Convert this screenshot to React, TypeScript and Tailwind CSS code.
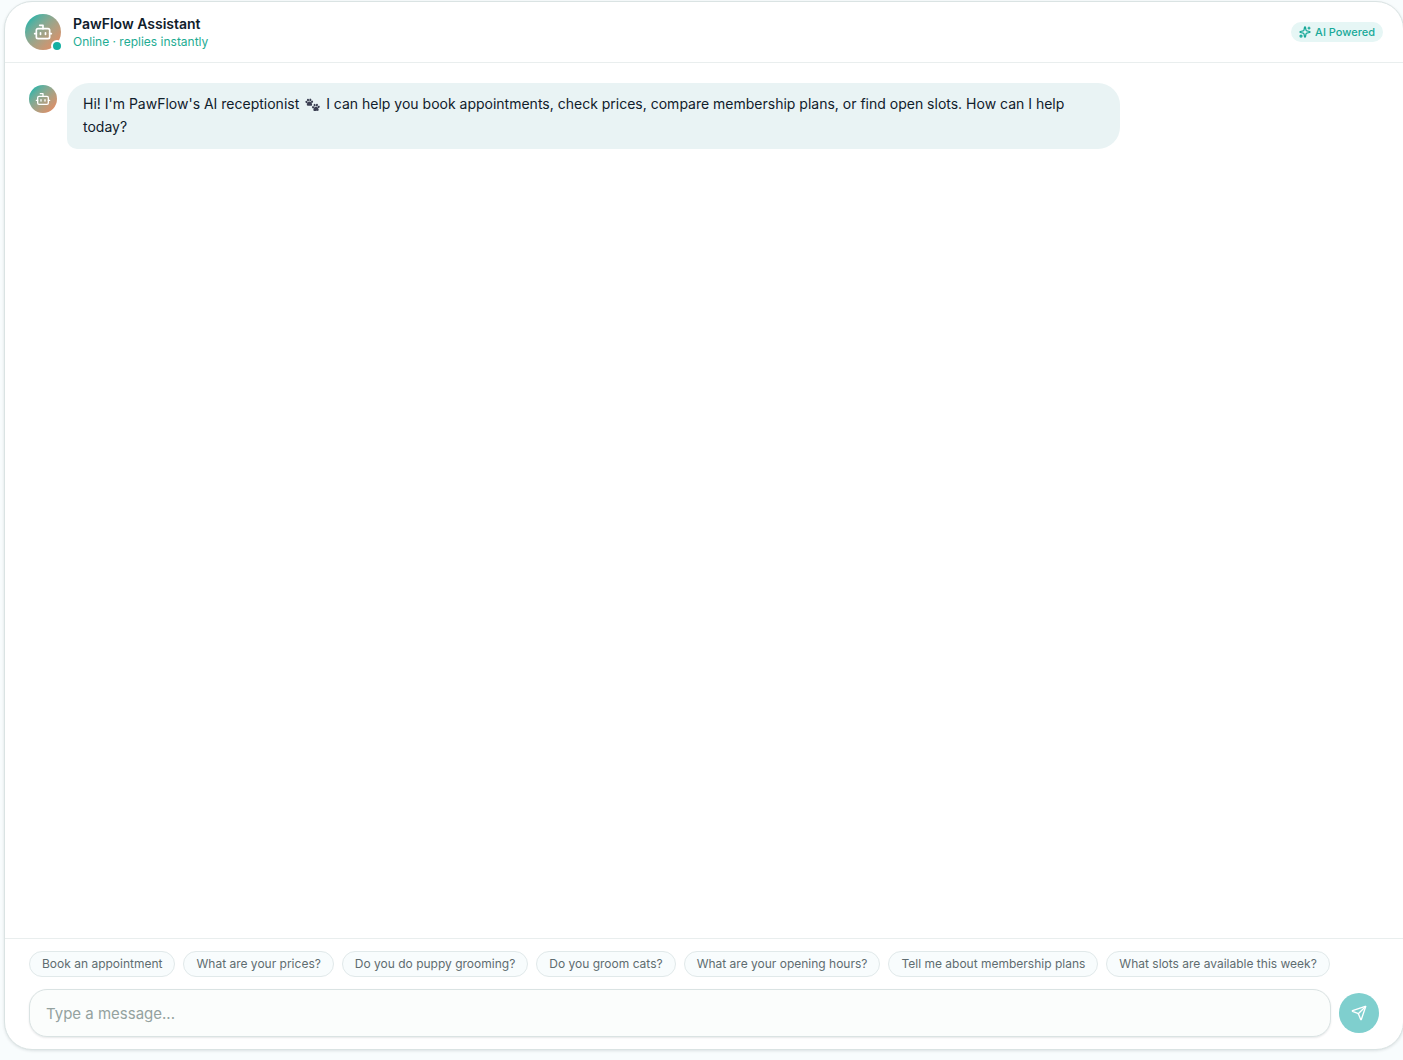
import { useState } from 'react';
import { Bot, Send, Sparkles } from 'lucide-react';
import clsx from 'clsx';

const SUGGESTIONS = [
  'Book an appointment',
  'What are your prices?',
  'Do you do puppy grooming?',
  'Do you groom cats?',
  'What are your opening hours?',
  'Tell me about membership plans',
  'What slots are available this week?',
];

function BotAvatar({ small = false }: { small?: boolean }) {
  return (
    <div
      className={clsx(
        'flex shrink-0 items-center justify-center rounded-full bg-linear-to-br from-[#35b2a5] from-15% to-[#d8906a] to-85% text-white',
        small ? 'mt-0.5 size-7' : 'size-9',
      )}
    >
      <Bot className={small ? 'size-4' : 'size-5'} />
    </div>
  );
}

function PawPrints() {
  return (
    <svg viewBox="0 0 16 14" className="mx-0.5 inline-block h-3.5 w-[15px] align-[-3px]" aria-hidden="true">
      <g fill="#3b3f52">
        <g id="paw">
          <ellipse cx="1.6" cy="3.9" rx="1.1" ry="1.3" transform="rotate(-30 1.6 3.9)" />
          <ellipse cx="3.2" cy="1.7" rx="1.1" ry="1.4" transform="rotate(-10 3.2 1.7)" />
          <ellipse cx="5.7" cy="1.6" rx="1.1" ry="1.4" transform="rotate(12 5.7 1.6)" />
          <ellipse cx="7.5" cy="3.5" rx="1.1" ry="1.3" transform="rotate(30 7.5 3.5)" />
          <path d="M4.6 3.3c1.5 0 3 2 3 3.300 0 1.200-1.200 1.400-2.700 1.100-1.400.4-3 .2-3-1 0-1.400 1.200-3.400 2.700-3.400Z" />
        </g>
        <use href="#paw" x="7" y="5.5" />
      </g>
    </svg>
  );
}

export default function App() {
  const [message, setMessage] = useState('');

  return (
    <div className="h-screen overflow-hidden bg-[#f8fcfd] pt-px pb-2.5 pl-1 font-['Inter',sans-serif] text-[#10202b]">
      <main className="-mr-px flex h-full flex-col overflow-hidden rounded-[28px] border border-[#dae3e3] bg-white shadow-[0_1px_3px_rgba(16,32,43,0.12)]">
        <header className="flex items-center justify-between border-b border-[#e9eeee] px-5 py-3">
          <div className="flex items-center gap-3">
            <div className="relative">
              <BotAvatar />
              <span className="absolute -right-0.5 -bottom-0.5 size-3 rounded-full border-2 border-white bg-[#14b0a2]" />
            </div>
            <div>
              <h1 className="text-sm leading-5 font-semibold">PawFlow Assistant</h1>
              <p className="text-xs leading-4 text-[#1eac93]">Online · replies instantly</p>
            </div>
          </div>
          <span className="flex items-center gap-1 rounded-full bg-[#e6f6f5] px-2 py-0.5 text-[11px] leading-4 font-medium text-[#18a999]">
            <Sparkles className="size-3" strokeWidth={2.5} />
            AI Powered
          </span>
        </header>

        <section className="flex-1 overflow-y-auto px-6 py-5" aria-label="Conversation">
          <div className="flex items-start gap-2.5">
            <BotAvatar small />
            <p className="max-w-[78%] rounded-[22px] rounded-bl-[10px] bg-[#e9f3f4] px-4 pt-[9px] pb-[11px] text-sm leading-[23px]">
              Hi! I'm PawFlow's AI receptionist <PawPrints /> I can help you book appointments, check prices, compare
              membership plans, or find open slots. How can I help today?
            </p>
          </div>
        </section>

        <footer className="flex flex-col gap-3 border-t border-[#e9eeee] px-6 py-3">
          <div className="flex flex-wrap gap-2">
            {SUGGESTIONS.map((text) => (
              <button
                key={text}
                type="button"
                onClick={() => setMessage(text)}
                className="rounded-full border border-[#e1e9ea] bg-[#f8fcfd] px-3 py-1 text-xs leading-4 text-[#5f6c70]"
              >
                {text}
              </button>
            ))}
          </div>
          <form className="flex items-center gap-2" onSubmit={(e) => e.preventDefault()}>
            <input
              type="text"
              aria-label="Message"
              placeholder="Type a message..."
              value={message}
              onChange={(e) => setMessage(e.target.value)}
              className="h-12 min-w-0 flex-1 rounded-[18px] border border-[#dae3e3] bg-[#fbfdfc] px-4 text-[15px] shadow-[0_1px_2px_rgba(16,32,43,0.10)] outline-none placeholder:text-[#94a29f]"
            />
            <button
              type="submit"
              aria-label="Send message"
              className="flex size-10 shrink-0 items-center justify-center rounded-full bg-[#7fcfce] text-white"
            >
              <Send className="size-4" />
            </button>
          </form>
        </footer>
      </main>
    </div>
  );
}
